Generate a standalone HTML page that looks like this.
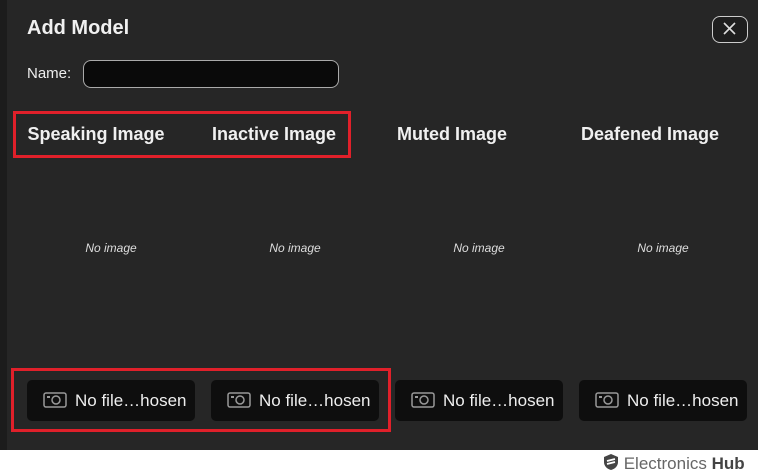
<!DOCTYPE html>
<html><head><style>
body{margin:0;width:758px;height:475px;background:#fff;overflow:hidden;font-family:"Liberation Sans",sans-serif;position:relative}
.dlg{position:absolute;left:0;top:0;width:758px;height:450px;background:#262626}
.strip{position:absolute;left:0;top:0;width:7px;height:450px;background:#1c1c1c}
.t{position:absolute;color:#f0f0f0;font-weight:bold}
.h{position:absolute;top:124px;width:184px;text-align:center;color:#f0f0f0;font-weight:bold;font-size:18px}
.ni{position:absolute;top:241px;width:184px;text-align:center;color:#ddd;font-style:italic;font-size:12px}
.btn{position:absolute;top:380px;width:168px;height:41px;background:#0e0e0e;border-radius:5px;color:#eee;font-size:17px;line-height:41px;box-sizing:border-box;padding-left:48px}
.btn svg{position:absolute;left:16px;top:11px}
.red{position:absolute;border:3px solid #e0202a;box-sizing:border-box}
</style></head><body>
<div class="dlg"></div><div class="strip"></div>
<div class="t" style="left:27px;top:17px;font-size:20px">Add Model</div>
<div style="position:absolute;left:27px;top:65px;color:#eee;font-size:15px">Name:</div>
<div style="position:absolute;left:83px;top:60px;width:256px;height:28px;box-sizing:border-box;border:1px solid #aaa;border-radius:8px;background:#0a0a0a"></div>
<div style="position:absolute;left:712px;top:16px;width:36px;height:27px;box-sizing:border-box;border:1.5px solid #ccc;border-radius:8px;background:#1e1e1e">
<svg width="33" height="24" viewBox="0 0 33 24"><path d="M11 6L22 17M22 6L11 17" stroke="#ddd" stroke-width="1.6"/></svg></div>
<div class="h" style="left:4px">Speaking Image</div>
<div class="h" style="left:182px">Inactive Image</div>
<div class="h" style="left:360px">Muted Image</div>
<div class="h" style="left:558px">Deafened Image</div>
<div class="ni" style="left:19px">No image</div>
<div class="ni" style="left:203px">No image</div>
<div class="ni" style="left:387px">No image</div>
<div class="ni" style="left:571px">No image</div>
<div class="btn" style="left:27px"><svg width="24" height="18" viewBox="0 0 24 18"><rect x="1" y="2" width="22" height="14" rx="2" fill="none" stroke="#999" stroke-width="1.5"/><circle cx="13" cy="9" r="4" fill="none" stroke="#999" stroke-width="1.5"/><rect x="4" y="5" width="3" height="2" fill="#999"/></svg>No file…hosen</div>
<div class="btn" style="left:211px"><svg width="24" height="18" viewBox="0 0 24 18"><rect x="1" y="2" width="22" height="14" rx="2" fill="none" stroke="#999" stroke-width="1.5"/><circle cx="13" cy="9" r="4" fill="none" stroke="#999" stroke-width="1.5"/><rect x="4" y="5" width="3" height="2" fill="#999"/></svg>No file…hosen</div>
<div class="btn" style="left:395px"><svg width="24" height="18" viewBox="0 0 24 18"><rect x="1" y="2" width="22" height="14" rx="2" fill="none" stroke="#999" stroke-width="1.5"/><circle cx="13" cy="9" r="4" fill="none" stroke="#999" stroke-width="1.5"/><rect x="4" y="5" width="3" height="2" fill="#999"/></svg>No file…hosen</div>
<div class="btn" style="left:579px"><svg width="24" height="18" viewBox="0 0 24 18"><rect x="1" y="2" width="22" height="14" rx="2" fill="none" stroke="#999" stroke-width="1.5"/><circle cx="13" cy="9" r="4" fill="none" stroke="#999" stroke-width="1.5"/><rect x="4" y="5" width="3" height="2" fill="#999"/></svg>No file…hosen</div>
<div class="red" style="left:13px;top:111px;width:338px;height:47px"></div>
<div class="red" style="left:11px;top:368px;width:380px;height:64px"></div>
<div style="position:absolute;left:603px;top:453px;font-size:17px;color:#666">
<svg width="16" height="18" viewBox="0 0 16 18" style="vertical-align:-2px"><path d="M8 1L15 4V9C15 13 12 16 8 17C4 16 1 13 1 9V4Z" fill="#444"/><path d="M4 8L12 6M4 11L12 9" stroke="#fff" stroke-width="1.8"/></svg> Electronics <b style="color:#444">Hub</b></div>
</body></html>
